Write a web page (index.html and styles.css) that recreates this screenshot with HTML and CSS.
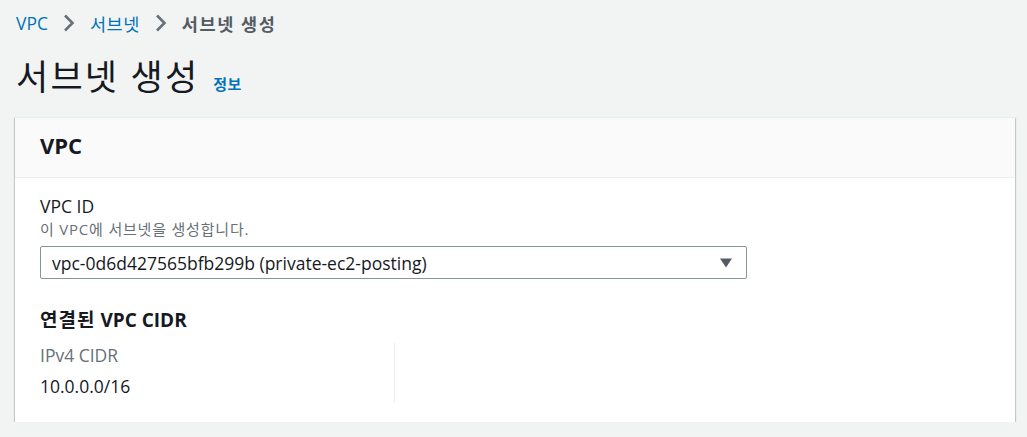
FILE: index.html
```html
<!DOCTYPE html>
<html lang="ko">
<head>
<meta charset="utf-8">
<title>서브넷 생성</title>
<link rel="stylesheet" href="styles.css">
</head>
<body>
<div class="page">
  <nav class="breadcrumbs">
    <a class="crumb-link" href="#">VPC</a>
    <svg class="chev" width="14" height="20" viewBox="0 0 14 20"><path d="M3 2.5 L10.5 10 L3 17.5" fill="none" stroke="#687078" stroke-width="2.6"/></svg>
    <a class="crumb-link ko" href="#">서브넷</a>
    <svg class="chev" width="14" height="20" viewBox="0 0 14 20"><path d="M3 2.5 L10.5 10 L3 17.5" fill="none" stroke="#687078" stroke-width="2.6"/></svg>
    <span class="crumb-current">서브넷 생성</span>
  </nav>
  <div class="title-row">
    <h1 class="title">서브넷 생성</h1>
    <a class="info" href="#">정보</a>
  </div>
  <section class="card">
    <header class="card-header">
      <h2 class="card-title">VPC</h2>
    </header>
    <div class="card-body">
      <div class="label">VPC ID</div>
      <div class="desc">이 VPC에 서브넷을 생성합니다.</div>
      <div class="select">
        <span class="select-value">vpc-0d6d427565bfb299b (private-ec2-posting)</span>
        <svg class="caret" width="12" height="10" viewBox="0 0 12 10"><path d="M0 0.5 H12 L6 9.5 Z" fill="#545b64"/></svg>
      </div>
      <h3 class="sub-title"><span class="ko-bold">연결된</span> VPC CIDR</h3>
      <div class="kv">
        <div class="kv-col">
          <div class="kv-key">IPv4 CIDR</div>
          <div class="kv-val">10.0.0.0/16</div>
        </div>
      </div>
    </div>
  </section>
</div>
</body>
</html>
```
FILE: styles.css
```css
html, body {
  margin: 0;
  padding: 0;
  background: #f2f3f3;
}
body {
  font-family: "Open Sans", "Noto Sans CJK KR", sans-serif;
  color: #16191f;
}
.page {
  padding: 0 12px 0 15px;
}
.breadcrumbs {
  height: 46px;
  display: flex;
  align-items: center;
  font-size: 17.5px;
  padding-left: 1px;
}
.crumb-link {
  color: #0073bb;
  text-decoration: none;
}
.ko {
  letter-spacing: 0.5px;
}
.chev {
  margin: 0 14px 0 14px;
  display: block;
}
.crumb-current {
  color: #545b64;
  font-weight: 700;
  letter-spacing: 1.6px;
}
.title-row {
  margin-top: 9px;
  display: flex;
  align-items: baseline;
  padding-left: 1px;
}
.title {
  margin: 0;
  font-size: 35px;
  line-height: 44px;
  font-weight: 400;
  color: #16191f;
  letter-spacing: 2.2px;
}
.info {
  margin-left: 14px;
  font-size: 15px;
  font-weight: 700;
  color: #0073bb;
  text-decoration: none;
  letter-spacing: 0.5px;
}
.card {
  margin-top: 18px;
  width: 1000px;
  background: #ffffff;
  box-shadow: 0 1px 1px 0 rgba(0, 28, 36, 0.3), 1px 1px 1px 0 rgba(0, 28, 36, 0.15), -1px 1px 1px 0 rgba(0, 28, 36, 0.15);
  border-top: 1px solid #eaeded;
}
.card-header {
  box-sizing: border-box;
  height: 60px;
  background: #fafafa;
  border-bottom: 1px solid #eaeded;
  display: flex;
  align-items: center;
  padding: 0 25px 6px 25px;
}
.card-title {
  margin: 0;
  font-size: 22px;
  line-height: 28px;
  font-weight: 700;
}
.card-body {
  padding: 17px 25px 20px 25px;
}
.label {
  font-size: 17.5px;
  line-height: 22px;
}
.desc {
  margin-top: 2px;
  font-size: 15px;
  line-height: 20px;
  color: #687078;
  letter-spacing: 0.8px;
}
.select {
  margin-top: 7px;
  width: 707px;
  height: 33px;
  box-sizing: border-box;
  border: 1px solid #879596;
  border-radius: 2px;
  display: flex;
  align-items: center;
  justify-content: space-between;
  padding: 0 14px 0 11px;
}
.select-value {
  font-size: 17.5px;
}
.caret {
  display: block;
}
.sub-title {
  margin: 28px 0 0 0;
  font-size: 19px;
  line-height: 26px;
  font-weight: 700;
}
.ko-bold {
  letter-spacing: 1px;
}
.kv {
  margin-top: 10px;
  display: flex;
}
.kv-col {
  width: 354px;
  border-right: 1px solid #eaeded;
  padding-bottom: 5px;
}
.kv-key {
  padding-top: 1px;
  font-size: 17.5px;
  line-height: 22px;
  color: #687078;
}
.kv-val {
  margin-top: 9px;
  font-size: 17.5px;
  line-height: 22px;
}
```
